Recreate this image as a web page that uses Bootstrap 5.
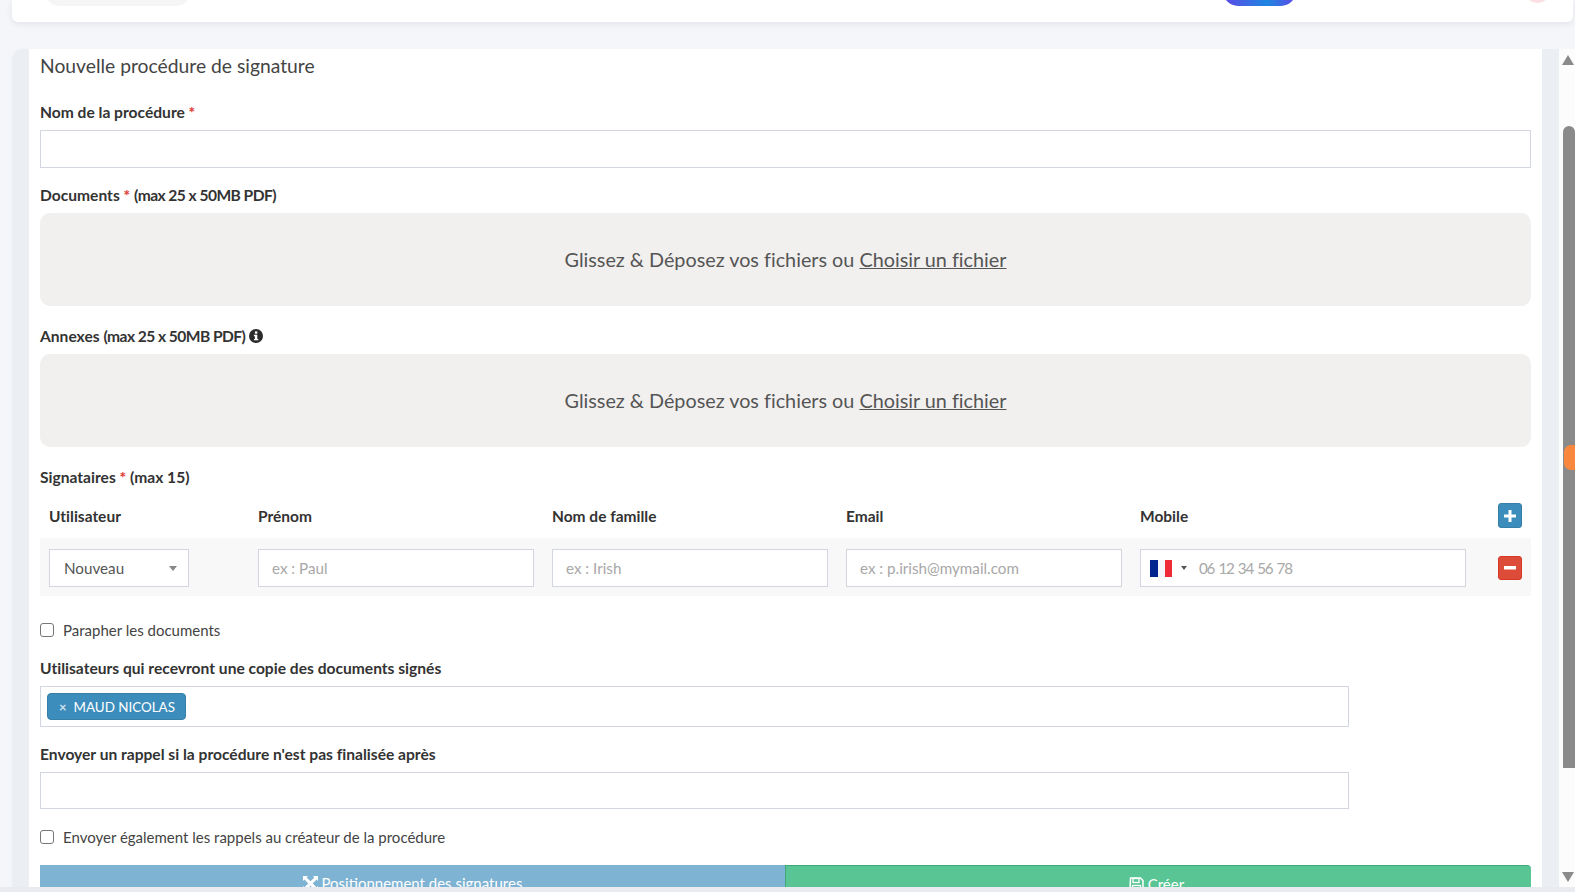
<!DOCTYPE html>
<html lang="fr">
<head>
  <meta charset="UTF-8">
  <title>Nouvelle procédure de signature</title>
  <link href="https://cdn.jsdelivr.net/npm/bootstrap@5.3.3/dist/css/bootstrap.min.css" rel="stylesheet">
  <style>
    html, body { height: 892px; overflow: hidden; }
    body { background: #f5f6f9; color: #333; font-family: "Lato", "Noto Sans", sans-serif; font-size: 15px; line-height: 18px; font-variant-ligatures: none; }
    .top-card { height: 22px; margin-left: 12px; margin-right: 2px; background: #fff; border-radius: 0 0 6px 6px; box-shadow: 0 2px 6px rgba(60,70,100,.1); overflow: hidden; flex: none; }
    .search-pill { width: 146px; height: 30px; margin-top: -24px; margin-left: 33px; background: #f5f5f6; border-radius: 18px; flex: none; }
    .action-pill { width: 73px; height: 30px; margin-top: -24px; margin-left: 1032px; background: linear-gradient(90deg, #5f48e8, #1d86e0 60%, #5f48e8); border-radius: 20px; flex: none; }
    .avatar-cut { width: 27px; height: 27px; margin-top: -24px; margin-left: 228px; background: #fbdfe3; border-radius: 50%; flex: none; }
    .work { height: 838px; margin-top: 27px; flex: none; overflow: hidden; }
    .side-strip { width: 17px; background: #ebeef3; flex: none; }
    .side-strip.left { margin-left: 12px; border-radius: 10px 0 0 0; }
    .sheet { width: 1513px; padding: 0 11px; background: #fff; flex: none; }
    .sheet-title { font-size: 19.3px; line-height: 34px; color: #444; margin: 0 0 20px; font-weight: 400; }
    .fld-label { display: block; font-weight: 700; font-size: 15.6px; line-height: 18px; margin-bottom: 9px; color: #333; }
    .fld-label b { color: #e0433b; }
    .lim-note { letter-spacing: -.55px; }
    .fld { margin-bottom: 21px; }
    .fld.first { margin-bottom: 18px; }
    .form-control, .form-select { border-radius: 0; border-color: #d2d6e0; color: #555; font-size: 15.2px; height: 38px; padding: 0 13px; box-shadow: none; }
    .form-control::placeholder { color: #a8a8a8; }
    .short-input { height: 37px; }
    .drop-zone { height: 93px; padding-bottom: 2px; background: #f1f0ef; border-radius: 10px; color: #555; font-size: 19.8px; }
    .drop-zone u { cursor: pointer; }
    .sig-table { table-layout: fixed; width: 1491px; margin-bottom: 25px; }
    .sig-table th { height: 43px; padding: 8px 9px 10px; vertical-align: middle; font-weight: 700; font-size: 15.5px; color: #333; }
    .sig-table td { height: 58px; padding: 11px 9px 9px; background: #f8f8f8; vertical-align: top; }
    .col-user { width: 209px; }
    .col-mid { width: 294px; }
    .col-tel { width: 344px; }
    .col-act { width: 56px; }
    .user-select { width: 140px; padding: 0 14px; background-image: url("data:image/svg+xml,%3Csvg xmlns='http://www.w3.org/2000/svg' width='8' height='5'%3E%3Cpath d='M0 0h8L4 5z' fill='%23888'/%3E%3C/svg%3E"); background-size: 8px 5px; background-position: right 11px center; }
    .tel-box { height: 38px; border: 1px solid #d2d6e0; background: #fff; }
    .tel-box input { border: 0; outline: 0; flex: 1; min-width: 0; font-size: 15.2px; letter-spacing: -1.2px; word-spacing: 1.5px; color: #555; padding: 0; }
    .tel-box input::placeholder { color: #a8a8a8; }
    .flag-svg { margin-left: 9px; margin-right: 9px; }
    .tel-caret { width: 0; height: 0; border-left: 3px solid transparent; border-right: 3px solid transparent; border-top: 4px solid #555; margin-right: 12px; }
    .sq-btn { width: 24px; height: 25px; padding: 0; border-radius: 3px; border: 1px solid #367fa9; background: #3c8dbc; margin-left: 14px; }
    .sq-btn.red { height: 24px; margin-top: 7px; border-color: #d73925; background: #dd4b39; }
    .chk-row { margin-bottom: 20px; line-height: 18px; color: #444; }
    .chk-row.last { margin-bottom: 19px; }
    .chk-row .form-check-input { width: 14px; height: 14px; margin: 0 9px 0 0; border: 1px solid #767676; border-radius: 3px; flex: none; }
    .narrow-fld { width: 1309px; margin-bottom: 18px; }
    .narrow-fld.gap-more { margin-bottom: 19px; }
    .tag-box { height: 41px; border: 1px solid #d2d6e0; padding: 6px; }
    .tag-chip { height: 27px; width: 139px; padding: 0 11px; background: #3c8dbc; border: 1px solid #367fa9; border-radius: 4px; color: #fff; font-size: 13.4px; white-space: nowrap; }
    .tag-chip span { font-size: 13px; font-weight: 700; margin-right: 7px; opacity: .75; }
    .foot-btn { flex: 1; height: 36px; border: 0; border-radius: 0; color: #fff; font-size: 15px; padding: 0; line-height: 18px; }
    .foot-btn.blue { background: #7fb3d3; }
    .foot-btn.green { background: #5ac594; border-top: 1px solid #3fa878; border-left: 1px solid #3fa878; border-radius: 0 4px 0 0; }
    .foot-btn.green svg { margin-left: -4px; }
    .foot-btn svg { vertical-align: -2px; }
    .scroll-rail { position: relative; width: 16px; background: #fcfcfc; flex: none; }
    .arrow-up { width: 0; height: 0; margin: 6px 0 0 3px; border-left: 6.5px solid transparent; border-right: 6.5px solid transparent; border-bottom: 10px solid #8a8a8a; }
    .scroll-thumb { width: 12px; height: 642px; margin: 61px 0 0 4px; background: #8a8a8a; border-radius: 6px 6px 0 0; }
    .arrow-down { width: 0; height: 0; margin: 104px 0 0 3px; border-left: 6.5px solid transparent; border-right: 6.5px solid transparent; border-top: 10px solid #8a8a8a; }
    .orange-dot { position: absolute; left: 5px; top: 396px; width: 12px; height: 25px; background: #f9873e; border-radius: 7px 0 0 7px; }
    .bottom-band { height: 5px; background: #e9ebf0; flex: none; }
  </style>
</head>
<body class="d-flex flex-column">

  <div class="top-card d-flex align-items-start">
    <div class="search-pill"></div>
    <div class="action-pill"></div>
    <div class="avatar-cut"></div>
  </div>

  <div class="work d-flex">
    <div class="side-strip left"></div>
    <div class="sheet">
      <h5 class="sheet-title">Nouvelle procédure de signature</h5>

      <div class="fld first">
        <label class="fld-label">Nom de la procédure <b>*</b></label>
        <input type="text" class="form-control">
      </div>

      <div class="fld">
        <label class="fld-label">Documents <b>*</b> <span class="lim-note">(max 25 x 50MB PDF)</span></label>
        <div class="drop-zone d-flex align-items-center justify-content-center">
          <div>Glissez &amp; Déposez vos fichiers ou <u>Choisir un fichier</u></div>
        </div>
      </div>

      <div class="fld">
        <label class="fld-label">Annexes <span class="lim-note">(max 25 x 50MB PDF)</span>
          <svg width="14" height="14" viewBox="0 0 14 14" style="vertical-align:-1px"><circle cx="7" cy="7" r="7" fill="#2b2b2b"/><rect x="5.900" y="2.400" width="2.400" height="2.300" fill="#fff"/><path d="M4.900 5.800h3.400v4.100h1v1.400H4.900V9.900h1V7.200h-1z" fill="#fff"/></svg>
        </label>
        <div class="drop-zone d-flex align-items-center justify-content-center">
          <div>Glissez &amp; Déposez vos fichiers ou <u>Choisir un fichier</u></div>
        </div>
      </div>

      <label class="fld-label">Signataires <b>*</b> (max 15)</label>
      <table class="table table-borderless sig-table">
        <colgroup>
          <col class="col-user"><col class="col-mid"><col class="col-mid"><col class="col-mid"><col class="col-tel"><col class="col-act">
        </colgroup>
        <thead>
          <tr>
            <th>Utilisateur</th>
            <th>Prénom</th>
            <th>Nom de famille</th>
            <th>Email</th>
            <th>Mobile</th>
            <th>
              <button type="button" class="btn sq-btn d-flex align-items-center justify-content-center">
                <svg width="12" height="12" viewBox="0 0 12 12"><path d="M4.500 0h3v4.500H12v3H7.500V12h-3V7.500H0v-3h4.500z" fill="#fff"/></svg>
              </button>
            </th>
          </tr>
        </thead>
        <tbody>
          <tr>
            <td>
              <select class="form-select user-select"><option>Nouveau</option></select>
            </td>
            <td><input type="text" class="form-control" placeholder="ex : Paul"></td>
            <td><input type="text" class="form-control" placeholder="ex : Irish"></td>
            <td><input type="text" class="form-control" placeholder="ex : p.irish@mymail.com"></td>
            <td>
              <div class="tel-box d-flex align-items-center">
                <svg class="flag-svg" width="22" height="17" viewBox="0 0 22 17"><rect width="8" height="17" fill="#00248f"/><rect x="8" width="7" height="17" fill="#f5f5fb"/><rect x="15" width="7" height="17" fill="#ef2b3a"/></svg>
                <span class="tel-caret"></span>
                <input type="text" placeholder="06 12 34 56 78">
              </div>
            </td>
            <td>
              <button type="button" class="btn sq-btn red d-flex align-items-center justify-content-center">
                <svg width="12" height="4" viewBox="0 0 12 4"><rect width="12" height="3.500" fill="#fff"/></svg>
              </button>
            </td>
          </tr>
        </tbody>
      </table>

      <div class="chk-row d-flex align-items-center">
        <input class="form-check-input" type="checkbox">
        <span>Parapher les documents</span>
      </div>

      <div class="narrow-fld">
        <label class="fld-label">Utilisateurs qui recevront une copie des documents signés</label>
        <div class="tag-box">
          <div class="tag-chip d-flex align-items-center"><span>×</span>MAUD NICOLAS</div>
        </div>
      </div>

      <div class="narrow-fld gap-more">
        <label class="fld-label">Envoyer un rappel si la procédure n'est pas finalisée après</label>
        <input type="text" class="form-control short-input">
      </div>

      <div class="chk-row last d-flex align-items-center">
        <input class="form-check-input" type="checkbox">
        <span>Envoyer également les rappels au créateur de la procédure</span>
      </div>

      <div class="d-flex">
        <button type="button" class="btn foot-btn blue">
          <svg width="15" height="15" viewBox="0 0 15 15"><path d="M0 0h5L3.600 1.400 7.500 5.300 11.400 1.400 10 0h5v5l-1.400-1.400L9.700 7.500l3.900 3.900L15 10v5h-5l1.400-1.400-3.900-3.900-3.900 3.900L5 15H0v-5l1.400 1.400 3.900-3.900L1.400 3.600 0 5z" fill="#fff"/></svg>
          Positionnement des signatures
        </button>
        <button type="button" class="btn foot-btn green">
          <svg width="15" height="15" viewBox="0 0 15 15"><path d="M1.500 1h10l2.500 2.500v10H1z" fill="none" stroke="#fff" stroke-width="1.500"/><rect x="4" y="1.500" width="6" height="4" fill="none" stroke="#fff" stroke-width="1.300"/><rect x="3.500" y="8.500" width="8" height="5" fill="none" stroke="#fff" stroke-width="1.300"/></svg>
          Créer
        </button>
      </div>
    </div>
    <div class="side-strip"></div>
    <div class="scroll-rail">
      <div class="arrow-up"></div>
      <div class="scroll-thumb"></div>
      <div class="arrow-down"></div>
      <div class="orange-dot"></div>
    </div>
  </div>

  <div class="bottom-band"></div>

  <script src="https://cdn.jsdelivr.net/npm/bootstrap@5.3.3/dist/js/bootstrap.bundle.min.js"></script>
</body>
</html>
